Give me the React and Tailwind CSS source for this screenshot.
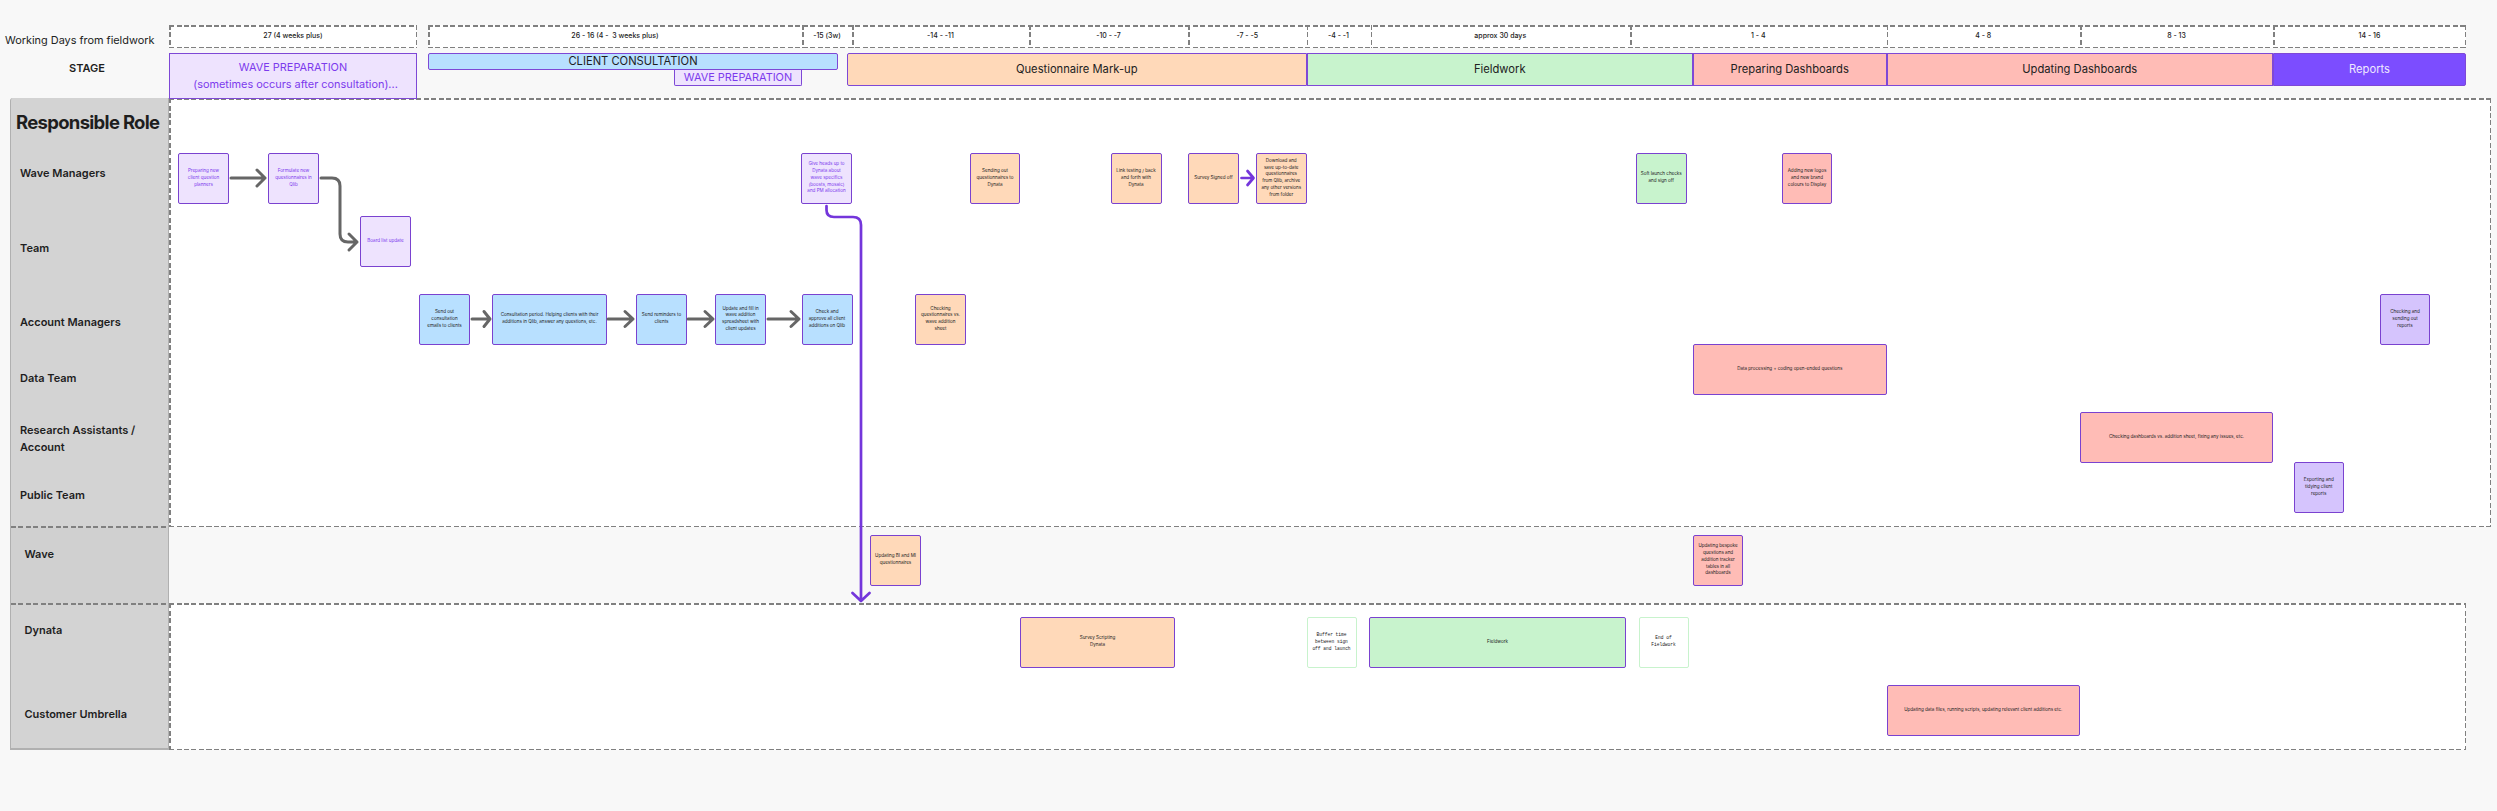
import React from 'react';

const hDash = 'h-[1.5px] bg-[repeating-linear-gradient(90deg,#808080_0,#808080_5px,transparent_5px,transparent_7.5px)]';
const vDash = 'w-[1.5px] bg-[repeating-linear-gradient(180deg,#808080_0,#808080_5px,transparent_5px,transparent_7.5px)]';

const cardStyles = {
  lilac: 'bg-[#eee3fe] text-[#7c3aed] border-[#7a42d0]',
  blue: 'bg-[#b8e0ff] text-[#222222] border-[#7a42d0]',
  peach: 'bg-[#ffd9b9] text-[#222222] border-[#7a42d0]',
  green: 'bg-[#c8f3cd] text-[#222222] border-[#7a42d0]',
  pink: 'bg-[#ffbcb6] text-[#222222] border-[#7a42d0]',
  violet: 'bg-[#d5c4fd] text-[#222222] border-[#7a42d0]',
  ghost: 'bg-white text-[#222222] border-[#c8f3cd] font-["Liberation_Mono",monospace]',
};

const nodes = [
  { tone: 'lilac', pos: 'left-[9px] top-[55px] w-[51px]', text: 'Preparing new\nclient question\nplanners' },
  { tone: 'lilac', pos: 'left-[99px] top-[55px] w-[51px]', text: 'Formulate new\nquestionnaires in\nQlib' },
  { tone: 'lilac', pos: 'left-[191px] top-[118px] w-[51px]', text: 'Board list update' },
  { tone: 'lilac', pos: 'left-[632px] top-[55px] w-[51px]', text: 'Give heads up to\nDynata about\nwave specifics\n(boosts, mosaic)\nand PM allocation' },
  { tone: 'peach', pos: 'left-[801px] top-[55px] w-[50px]', text: 'Sending out\nquestionnaires to\nDynata' },
  { tone: 'peach', pos: 'left-[941.5px] top-[55px] w-[51px]', text: 'Link testing / back\nand forth with\nDynata' },
  { tone: 'peach', pos: 'left-[1019px] top-[55px] w-[51px]', text: 'Survey Signed off' },
  { tone: 'peach', pos: 'left-[1087px] top-[55px] w-[50.5px]', text: 'Download and\nsave up-to-date\nquestionnaires\nfrom Qlib, archive\nany other versions\nfrom folder' },
  { tone: 'green', pos: 'left-[1467px] top-[55px] w-[50.5px]', text: 'Soft launch checks\nand sign off' },
  { tone: 'pink', pos: 'left-[1613px] top-[55px] w-[50px]', text: 'Adding new logos\nand new brand\ncolours to Display' },
  { tone: 'blue', pos: 'left-[250px] top-[196px] w-[51px]', text: 'Send out\nconsultation\nemails to clients' },
  { tone: 'blue', pos: 'left-[323px] top-[196px] w-[115px]', text: 'Consultation period. Helping clients with their\nadditions in Qlib, answer any questions, etc.' },
  { tone: 'blue', pos: 'left-[467px] top-[196px] w-[51px]', text: 'Send reminders to\nclients' },
  { tone: 'blue', pos: 'left-[546px] top-[196px] w-[51px]', text: 'Update and fill in\nwave addition\nspreadsheet with\nclient updates' },
  { tone: 'blue', pos: 'left-[632.5px] top-[196px] w-[51px]', text: 'Check and\napprove all client\nadditions on Qlib' },
  { tone: 'peach', pos: 'left-[746px] top-[196px] w-[51px]', text: 'Checking\nquestionnaires vs.\nwave addition\nsheet' },
  { tone: 'violet', pos: 'left-[2211px] top-[196px] w-[50px]', text: 'Checking and\nsending out\nreports' },
  { tone: 'pink', pos: 'left-[1524px] top-[246px] w-[193.5px]', text: 'Data processing + coding open-ended questions' },
  { tone: 'pink', pos: 'left-[1911px] top-[314px] w-[193px]', text: 'Checking dashboards vs. addition sheet, fixing any issues, etc.' },
  { tone: 'violet', pos: 'left-[2124.5px] top-[364px] w-[50.5px]', text: 'Exporting and\ntidying client\nreports' },
  { tone: 'peach', pos: 'left-[701px] top-[437px] w-[51px]', text: 'Updating BI and MI\nquestionnaires' },
  { tone: 'pink', pos: 'left-[1524px] top-[437px] w-[50px]', text: 'Updating bespoke\nquestions and\naddition tracker\ntables in all\ndashboards' },
  { tone: 'peach', pos: 'left-[851px] top-[519px] w-[155px]', text: 'Survey Scripting\nDynata' },
  { tone: 'ghost', pos: 'left-[1137.5px] top-[519px] w-[50px]', text: 'Buffer time\nbetween sign\noff and launch' },
  { tone: 'green', pos: 'left-[1200px] top-[519px] w-[257px]', text: 'Fieldwork' },
  { tone: 'ghost', pos: 'left-[1469.5px] top-[519px] w-[50px]', text: 'End of\nFieldwork' },
  { tone: 'pink', pos: 'left-[1717.5px] top-[587px] w-[193.5px]', text: 'Updating data files, running scripts, updating relevant client additions etc.' },
];

const timeline = [
  { w: 'w-[374px]', label: '26 - 16 (4 -  3 weeks plus)' },
  { w: 'w-[50px]', label: '-15 (3w)' },
  { w: 'w-[177px]', label: '-14 - -11' },
  { w: 'w-[159px]', label: '-10 - -7' },
  { w: 'w-[118.5px]', label: '-7 - -5' },
  { w: 'w-[64px]', label: '-4 - -1' },
  { w: 'w-[259.5px]', label: 'approx 30 days' },
  { w: 'w-[256.5px]', label: '1 - 4' },
  { w: 'w-[193.5px]', label: '4 - 8' },
  { w: 'w-[193px]', label: '8 - 13' },
  { w: 'w-[193px]', label: '14 - 16' },
];

const stages = [
  { w: 'w-[459.5px]', tone: 'bg-[#ffd9b9] text-[#222222] rounded-l-[2px]', label: 'Questionnaire Mark-up' },
  { w: 'w-[386.5px]', tone: 'bg-[#c8f3cd] text-[#222222]', label: 'Fieldwork' },
  { w: 'w-[193.5px]', tone: 'bg-[#ffbcb6] text-[#222222]', label: 'Preparing Dashboards' },
  { w: 'w-[386.5px]', tone: 'bg-[#ffbcb6] text-[#222222]', label: 'Updating Dashboards' },
  { w: 'w-[193px]', tone: 'bg-[#7c4dff] text-[#efe8ff] rounded-r-[2px]', label: 'Reports' },
];

const DashedFrame = () => (
  <>
    <div className={`absolute inset-x-0 top-0 ${hDash}`}></div>
    <div className={`absolute inset-x-0 bottom-0 ${hDash}`}></div>
    <div className={`absolute inset-y-0 left-0 ${vDash}`}></div>
    <div className={`absolute inset-y-0 right-0 ${vDash}`}></div>
  </>
);

const TimeCell = ({ className, label, divider }) => (
  <div className={`relative flex h-full items-center justify-center ${className}`}>
    {divider && <div className={`absolute inset-y-0 left-0 ${vDash}`}></div>}
    <span className="text-[7px] font-medium whitespace-pre text-[#222222]">{label}</span>
  </div>
);

const Card = ({ tone, pos, text }) => (
  <div
    className={`absolute z-10 flex h-[50.5px] items-center justify-center rounded-[2px] border-[1.5px] text-center text-[4.55px] leading-[6.8px] whitespace-pre-line ${pos} ${cardStyles[tone]}`}
  >
    {text}
  </div>
);

const RoleRow = ({ className, label, inset }) => (
  <div className={`flex items-center text-[11px] font-semibold leading-[17px] text-[#1e1e1e] ${inset ? 'pl-[13.5px]' : 'pl-[9px]'} ${className}`}>
    {label}
  </div>
);

const Connectors = () => (
  <svg className="absolute left-0 top-0 z-20 h-[652px] w-[2322px]" viewBox="0 0 2322 652" fill="none" strokeLinecap="round" strokeLinejoin="round">
    <g stroke="#666666" strokeWidth="3">
      <path d="M62 80H96M88 72L96 80L88 88" />
      <path d="M152 80H163Q171 80 171 88V136Q171 144 179 144H188M180 136L188 144L180 152" />
      <path d="M303 221H321M315 213.5L321 221L315 228.5" />
      <path d="M439 221H464M456 213.5L464 221L456 228.5" />
      <path d="M519 221H544M536 213.5L544 221L536 228.5" />
      <path d="M599 221H630M622 213.5L630 221L622 228.5" />
    </g>
    <g stroke="#7436db" strokeWidth="2.7">
      <path d="M1072.5 80H1084.5M1078.5 73L1084.5 80L1078.5 87" />
      <path d="M657.5 108V112Q657.5 119 665 119H684Q692 119 692 127V503M683.5 495L692 503L700.5 495" />
    </g>
  </svg>
);

const App = () => {
  return (
    <div className="h-[811px] w-[2497px] overflow-hidden bg-[#f8f8f8] pt-[25px] font-['Inter',sans-serif]">
      {/* Working days row */}
      <div className="flex h-[23px]">
        <div className="flex w-[169px] items-center pl-[5px] pt-[8px] text-[10.9px] whitespace-nowrap text-[#222222]">
          Working Days from fieldwork
        </div>
        <div className="relative h-full w-[248px] bg-white">
          <DashedFrame />
          <TimeCell className="w-full" label="27 (4 weeks plus)" />
        </div>
        <div className="relative ml-[11px] flex h-full w-[2038px] bg-white">
          <DashedFrame />
          {timeline.map((cell, i) => (
            <TimeCell key={cell.label} className={cell.w} label={cell.label} divider={i > 0} />
          ))}
        </div>
      </div>

      {/* Stage row */}
      <div className="relative z-30 mt-[5px] flex h-[45px] items-start">
        <div className="w-[169px] pl-[69px] pt-[6.5px] text-[11px] font-semibold leading-[17px] text-[#1e1e1e]">STAGE</div>
        <div className="flex h-[45.5px] w-[248px] flex-col items-center justify-center border-[1.5px] border-[#7e48d6] bg-[#eee3fe] pt-[1px] text-[10.9px] leading-[17px] text-[#7c3aed]">
          <span>WAVE PREPARATION</span>
          <span className="pl-[5px]">(sometimes occurs after consultation)...</span>
        </div>
        <div className="ml-[11px] w-[410px]">
          <div className="flex h-[17px] items-center justify-center rounded-[2px] border-[1.5px] border-[#7e48d6] bg-[#b8e0ff] text-[11.2px] text-[#1e1e1e]">
            CLIENT CONSULTATION
          </div>
          <div className="ml-[246px] flex h-[15.5px] w-[128px] items-center justify-center rounded-b-[2px] border-[1.5px] border-t-0 border-[#7e48d6] bg-[#eee3fe] text-[10.9px] text-[#7c3aed]">
            WAVE PREPARATION
          </div>
        </div>
        <div className="ml-[9px] flex h-[32.5px]">
          {stages.map((stage) => (
            <div
              key={stage.label}
              className={`flex items-center justify-center border-[1.5px] border-[#7e48d6] text-[11.2px] ${stage.w} ${stage.tone}`}
            >
              {stage.label}
            </div>
          ))}
        </div>
      </div>

      {/* Main board */}
      <div className="ml-[10px] flex">
        <aside className="h-[652px] w-[159px] overflow-hidden rounded-tl-[3px] border-x border-b-2 border-[#b0b0b0] bg-[#d3d3d3]">
          <div className="flex h-[428px] flex-col">
            <div className="flex h-[50px] items-center pl-[5px] text-[18.5px] font-bold tracking-[-0.7px] whitespace-nowrap text-[#1e1e1e]">
              Responsible Role
            </div>
            <RoleRow className="h-[51.4px]" label="Wave Managers" />
            <RoleRow className="h-[99.2px]" label="Team" />
            <RoleRow className="h-[48.8px]" label="Account Managers" />
            <RoleRow className="h-[62.6px]" label="Data Team" />
            <RoleRow className="h-[59px] pr-[8px]" label="Research Assistants / Account" />
            <RoleRow className="h-[54px]" label="Public Team" />
          </div>
          <div className={hDash}></div>
          <div className="h-[75.5px] bg-[#d0d0d0]">
            <RoleRow className="h-[53px]" label="Wave" inset />
          </div>
          <div className={hDash}></div>
          <div>
            <RoleRow className="h-[51px]" label="Dynata" inset />
            <RoleRow className="mt-[41.5px] h-[34px]" label="Customer Umbrella" inset />
          </div>
        </aside>

        <div className="relative h-[652px] w-[2322px]">
          <div className="relative h-[429px] bg-white">
            <DashedFrame />
          </div>
          <div className="h-[76px]"></div>
          <div className="relative h-[147px] w-[2297px] bg-white">
            <DashedFrame />
          </div>
          <Connectors />
          {nodes.map((node) => (
            <Card key={node.text} {...node} />
          ))}
        </div>
      </div>
    </div>
  );
};

export default App;
